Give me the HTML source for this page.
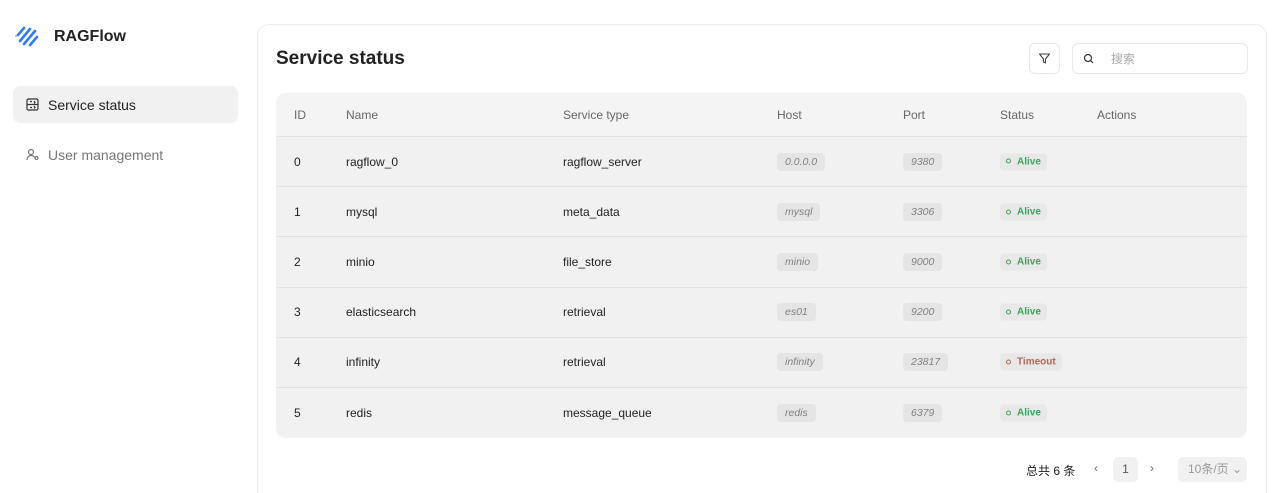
<!DOCTYPE html>
<html><head><meta charset="utf-8"><style>
*{box-sizing:border-box;margin:0;padding:0}
html,body{width:1280px;height:493px;overflow:hidden}
body{background:#fff;font-family:"Liberation Sans","Noto Sans CJK SC",sans-serif;color:#1f1f1f;position:relative}
.logo{position:absolute;left:14px;top:25px}
.brand{position:absolute;left:54px;top:28px;font-size:16px;font-weight:bold;color:#222}
.nav{position:absolute;left:13px;width:225px;height:37px;border-radius:7px;font-size:14px;display:flex;align-items:center;padding-left:13px}
.nav svg{margin-right:9px}
.card{position:absolute;left:257px;top:24px;width:1010px;height:469px;border:1px solid #ececec;border-bottom:none;border-radius:12px 12px 0 0;background:#fff}
h1{position:absolute;left:276px;top:48px;font-size:19px;font-weight:bold;color:#222}
.fbtn{position:absolute;left:1029px;top:43px;width:31px;height:31px;border:1px solid #e8e8e8;border-radius:6px;display:flex;align-items:center;justify-content:center}
.search{position:absolute;left:1072px;top:43px;width:176px;height:31px;border:1px solid #e8e8e8;border-radius:6px;font-size:12px;color:#aaa;display:flex;align-items:center;padding-left:10px}
.tbl{position:absolute;left:276px;top:93px;width:971px;height:345px;border-radius:10px;background:#f1f1f1;overflow:hidden;font-size:12px}
.hdr{height:44px;background:#f4f4f4;border-bottom:1px solid #e3e3e3;position:relative;color:#666}
.row{height:50.2px;border-bottom:1px solid #e3e3e3;position:relative}
.row:last-child{border-bottom:none}
.c{position:absolute;top:50%;transform:translateY(-50%);white-space:nowrap}
.tag{background:#e5e5e5;border-radius:4px;padding:3px 8px;font-style:italic;font-size:10.5px;color:#808080}
.st{background:#e8e8e8;border-radius:4px;padding:3px 6px;font-size:10px;font-weight:bold;color:#3aa35e}
.st.to{color:#b0675a}
.st::before{content:"";display:inline-block;width:3px;height:3px;border:1px solid currentColor;border-radius:50%;margin-right:6px;vertical-align:middle}
.pg{position:absolute;top:457px;font-size:12px}
</style></head><body>
<svg class="logo" width="26" height="24" viewBox="0 0 26 24"><g stroke="#2f7bf5" stroke-width="2.6" stroke-linecap="round"><line x1="4" y1="10" x2="10" y2="3"/><line x1="6" y1="16" x2="16" y2="4"/><line x1="10" y1="19" x2="21" y2="6"/><line x1="16" y1="20" x2="23" y2="12"/></g><circle cx="2" cy="11" r="1" fill="#aac"/></svg>
<div class="brand">RAGFlow</div>
<div class="nav" style="top:86px;background:#f1f1f1;color:#222"><svg width="13" height="13" viewBox="0 0 13 13" fill="none" stroke="#333" stroke-width="1.2"><rect x="1" y="1" width="11" height="11" rx="1.5"/><line x1="1" y1="6.5" x2="12" y2="6.5"/><path d="M4 3.5h2M4 9.5h2M8 3l1 1.5-1 1M8 8l1 1.5-1 1"/></svg>Service status</div>
<div class="nav" style="top:136px;color:#777"><svg width="13" height="13" viewBox="0 0 13 13" fill="none" stroke="#777" stroke-width="1.2"><circle cx="5" cy="4" r="2.5"/><path d="M1 12c0-3 2-4.5 4-4.5s3 .8 3.5 2"/><circle cx="10.5" cy="10" r="1.5"/></svg>User management</div>
<div class="card"></div>
<h1>Service status</h1>
<div class="fbtn"><svg width="13" height="13" viewBox="0 0 13 13" fill="none" stroke="#444" stroke-width="1.1" stroke-linejoin="round"><path d="M1.5 2h10l-4 5v4l-2-1V7z"/></svg></div>
<div class="search"><svg width="11" height="11" viewBox="0 0 11 11" fill="none" stroke="#333" stroke-width="1.2"><circle cx="5" cy="5" r="3.5"/><line x1="7.5" y1="7.5" x2="10" y2="10"/></svg><span style="margin-left:17px">搜索</span></div>
<div class="tbl">
<div class="hdr"><span class="c" style="left:18px">ID</span><span class="c" style="left:70px">Name</span><span class="c" style="left:287px">Service type</span><span class="c" style="left:501px">Host</span><span class="c" style="left:627px">Port</span><span class="c" style="left:724px">Status</span><span class="c" style="left:821px">Actions</span></div>
<div class="row"><span class="c" style="left:18px">0</span><span class="c" style="left:70px">ragflow_0</span><span class="c" style="left:287px">ragflow_server</span><span class="c tag" style="left:501px">0.0.0.0</span><span class="c tag" style="left:627px">9380</span><span class="c st" style="left:724px">Alive</span></div>
<div class="row"><span class="c" style="left:18px">1</span><span class="c" style="left:70px">mysql</span><span class="c" style="left:287px">meta_data</span><span class="c tag" style="left:501px">mysql</span><span class="c tag" style="left:627px">3306</span><span class="c st" style="left:724px">Alive</span></div>
<div class="row"><span class="c" style="left:18px">2</span><span class="c" style="left:70px">minio</span><span class="c" style="left:287px">file_store</span><span class="c tag" style="left:501px">minio</span><span class="c tag" style="left:627px">9000</span><span class="c st" style="left:724px">Alive</span></div>
<div class="row"><span class="c" style="left:18px">3</span><span class="c" style="left:70px">elasticsearch</span><span class="c" style="left:287px">retrieval</span><span class="c tag" style="left:501px">es01</span><span class="c tag" style="left:627px">9200</span><span class="c st" style="left:724px">Alive</span></div>
<div class="row"><span class="c" style="left:18px">4</span><span class="c" style="left:70px">infinity</span><span class="c" style="left:287px">retrieval</span><span class="c tag" style="left:501px">infinity</span><span class="c tag" style="left:627px">23817</span><span class="c st to" style="left:724px">Timeout</span></div>
<div class="row"><span class="c" style="left:18px">5</span><span class="c" style="left:70px">redis</span><span class="c" style="left:287px">message_queue</span><span class="c tag" style="left:501px">redis</span><span class="c tag" style="left:627px">6379</span><span class="c st" style="left:724px">Alive</span></div>
</div>
<div class="pg" style="left:1026px;top:462px">总共 6 条</div>
<div class="pg" style="left:1094px;top:461px;color:#666">‹</div>
<div class="pg" style="left:1113px;top:457px;width:25px;height:25px;background:#f1f1f1;border-radius:5px;text-align:center;line-height:25px;color:#555">1</div>
<div class="pg" style="left:1150px;top:461px;color:#666">›</div>
<div class="pg" style="left:1178px;top:457px;width:69px;height:25px;background:#f1f1f1;border-radius:5px;line-height:25px;padding-left:10px;color:#999">10条/页 ⌄</div>
</body></html>
